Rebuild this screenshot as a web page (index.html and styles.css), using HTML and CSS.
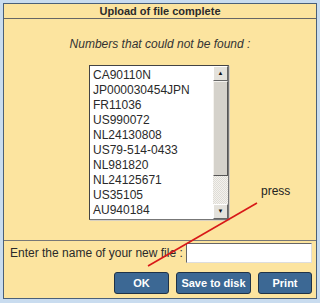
FILE: index.html
```html
<!DOCTYPE html>
<html lang="en">
<head>
  <meta charset="UTF-8" />
  <title>Upload of file complete</title>
  <link rel="stylesheet" href="styles.css">
</head>
<body>

<div class="dialog">
  <div class="dialog-title">Upload of file complete</div>

  <div class="dialog-body">
    <p class="notice">Numbers that could not be found :</p>

    <div class="listbox">
      <ul class="list-items">
        <li>CA90110N</li>
        <li>JP000030454JPN</li>
        <li>FR11036</li>
        <li>US990072</li>
        <li>NL24130808</li>
        <li>US79-514-0433</li>
        <li>NL981820</li>
        <li>NL24125671</li>
        <li>US35105</li>
        <li>AU940184</li>
      </ul>
      <div class="scrollbar">
        <div class="scroll-btn">&#9650;</div>
        <div class="scroll-track">
          <div class="scroll-thumb"></div>
        </div>
        <div class="scroll-btn">&#9660;</div>
      </div>
    </div>
  </div>

  <div class="dialog-footer">
    <div class="file-row">
      <label for="fileName">Enter the name of your new file :</label>
      <input type="text" id="fileName" />
    </div>
    <div class="buttons">
      <button class="btn btn-ok">OK</button>
      <button class="btn btn-save">Save to disk</button>
      <button class="btn btn-print">Print</button>
    </div>
  </div>

  <!-- annotation drawn over the dialog -->
  <span class="press-note">press</span>
  <svg class="press-arrow" width="320" height="303" viewBox="0 0 320 303">
    <line x1="257" y1="203" x2="148" y2="266" stroke="#d81818" stroke-width="1.6" />
  </svg>
</div>

</body>
</html>
```

FILE: styles.css
```css
* { box-sizing: border-box; }
body {
  margin: 0;
  background: #c9dcef;
  font-family: 'Liberation Sans', Arial, sans-serif;
  color: #222;
}
.dialog {
  margin: 3px 3px 0 3px;
  width: 314px;
  height: 296px;
  border: 1px solid #4a5f78;
  background: #fce49f;
  display: flex;
  flex-direction: column;
}
.dialog-title {
  height: 15px;
  line-height: 14px;
  text-align: center;
  font-weight: bold;
  font-size: 11px;
  color: #2a2a2a;
  border-bottom: 1px solid #666;
}
.dialog-body {
  flex: 1;
  display: flex;
  flex-direction: column;
  align-items: center;
}
.notice {
  margin: 17px 0 0 0;
  font-style: italic;
  font-size: 12px;
  line-height: 16px;
  color: #333;
}
.listbox {
  margin-top: 13px;
  margin-left: -2px;
  width: 140px;
  height: 155px;
  display: flex;
  background: #fff;
  border: 1px solid #777;
  border-top-color: #444;
  border-left-color: #444;
  box-shadow: 1px 1px 0 #d8d0c0;
}
.list-items {
  list-style: none;
  margin: 0;
  padding: 2px 0 0 3px;
  flex: 1;
  overflow: hidden;
}
.list-items li {
  font-size: 12px;
  line-height: 15px;
  color: #2a2a2a;
}
.scrollbar {
  width: 15px;
  display: flex;
  flex-direction: column;
  background: #e8e6e0;
}
.scroll-btn {
  height: 15px;
  font-size: 6px;
  line-height: 13px;
  text-align: center;
  color: #111;
  background: #e4e2dc;
  border: 1px solid #fff;
  border-right-color: #666;
  border-bottom-color: #666;
}
.scroll-track {
  flex: 1;
  background: repeating-conic-gradient(#f4f2ee 0 25%, #dedcd6 0 50%) 0 0 / 2px 2px;
}
.scroll-thumb {
  height: 95px;
  background: #d5d2cb;
  border: 1px solid #f4f2ee;
  border-right-color: #555;
  border-bottom-color: #555;
}
.dialog-footer {
  height: 58px;
  border-top: 1px solid #777;
  padding: 2px 4px 0 6px;
}
.file-row {
  display: flex;
  align-items: center;
  justify-content: space-between;
}
.file-row label {
  font-size: 12px;
  white-space: nowrap;
  color: #2a2a2a;
}
.file-row input {
  width: 126px;
  height: 20px;
  border: 1px solid #666;
  border-right-color: #ddd;
  border-bottom-color: #ddd;
  background: #fff;
}
.buttons {
  display: flex;
  justify-content: flex-end;
  gap: 7px;
  margin-top: 9px;
}
.btn {
  height: 22px;
  padding: 0;
  border: 1px solid #1f3247;
  border-radius: 3px;
  background: #3c6894;
  color: #fff;
  font-family: 'Liberation Sans', Arial, sans-serif;
  font-weight: bold;
  font-size: 11px;
  white-space: nowrap;
  cursor: pointer;
}
.btn-ok { width: 55px; }
.btn-save { width: 75px; }
.btn-print { width: 54px; }
.press-note {
  position: absolute;
  left: 261px;
  top: 184px;
  font-size: 12px;
  color: #222;
}
.press-arrow {
  position: absolute;
  left: 0;
  top: 0;
  pointer-events: none;
}
```
